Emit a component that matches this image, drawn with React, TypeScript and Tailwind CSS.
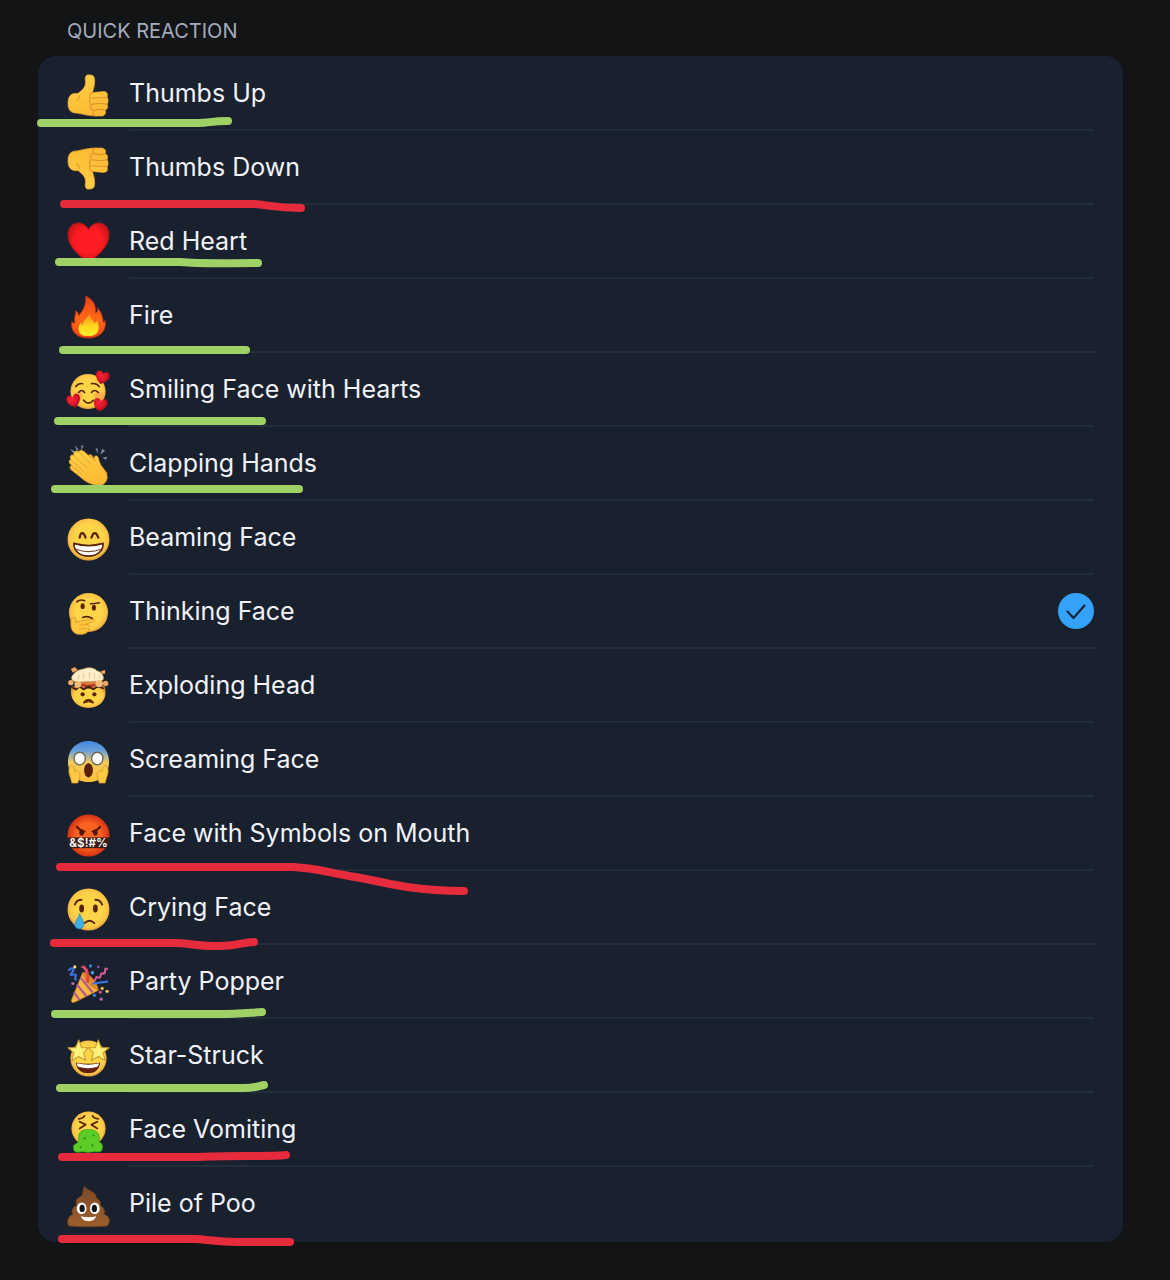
import React, { useState } from "react";

const BROWN = "#5a2408";

function Gradients() {
  return (
    <svg className="absolute h-0 w-0" aria-hidden="true">
      <defs>
        <radialGradient id="face" cx="50%" cy="48%" r="53%">
          <stop offset="0.6" stopColor="#ffd548" />
          <stop offset="0.85" stopColor="#fbc647" />
          <stop offset="1" stopColor="#dc9638" />
        </radialGradient>
        <linearGradient id="skin" x1="0" y1="0" x2="0.4" y2="1">
          <stop offset="0" stopColor="#ffd246" />
          <stop offset="1" stopColor="#fcba35" />
        </linearGradient>
        <radialGradient id="heart" cx="50%" cy="45%" r="58%">
          <stop offset="0.55" stopColor="#ff1d23" />
          <stop offset="1" stopColor="#c01216" />
        </radialGradient>
        <radialGradient id="smallHeart" cx="40%" cy="35%" r="65%">
          <stop offset="0" stopColor="#f5283a" />
          <stop offset="0.6" stopColor="#dd1526" />
          <stop offset="1" stopColor="#9b0e19" />
        </radialGradient>
        <radialGradient id="angry" cx="50%" cy="50%" r="52%">
          <stop offset="0.55" stopColor="#fb6420" />
          <stop offset="1" stopColor="#d22d13" />
        </radialGradient>
        <linearGradient id="scream" x1="0" y1="0" x2="0" y2="1">
          <stop offset="0" stopColor="#3f86e0" />
          <stop offset="0.25" stopColor="#6ea2d8" />
          <stop offset="0.52" stopColor="#f2cb5c" />
          <stop offset="1" stopColor="#fcc13c" />
        </linearGradient>
        <linearGradient id="flame" x1="0" y1="0" x2="0" y2="1">
          <stop offset="0" stopColor="#e8431a" />
          <stop offset="0.55" stopColor="#ff6a16" />
          <stop offset="1" stopColor="#f0451a" />
        </linearGradient>
        <linearGradient id="core" x1="0" y1="0" x2="0" y2="1">
          <stop offset="0" stopColor="#ff8a1c" />
          <stop offset="0.6" stopColor="#ffd91f" />
          <stop offset="1" stopColor="#fff02a" />
        </linearGradient>
        <linearGradient id="poo" x1="0" y1="0" x2="0" y2="1">
          <stop offset="0" stopColor="#7d4a2a" />
          <stop offset="1" stopColor="#9c5e2c" />
        </linearGradient>
        <clipPath id="mouthBand">
          <circle cx="22" cy="22" r="21.5" />
        </clipPath>
      </defs>
    </svg>
  );
}

function ThumbShape() {
  return (
    <>
      <path
        d="M23 1C19 0 18 4 19 8C19 14 15 17 11 20C5 19 1 22 1 30C1 37 4 40 10 40C16 41 22 43 29 43H36C40 42 40 39 39 37C42 36 42 33 41 31C43 28 42 25 41 24C42 20 41 18 37 18L26 19C28 13 29 8 28 4C27 1 25 1 23 1Z"
        fill="url(#skin)"
        stroke="#e9a030"
        strokeWidth="0.7"
      />
      <path
        d="M10 27C12 25 13 23 13 22M26 19C23 20 22 23 24 25C22 28 23 30 25 31C23 34 24 36 27 37C26 40 27 42 29 43M26 25C31 24 36 24 41 24M26 31C31 30 36 30 41 31M28 37C32 36 36 36 39 37"
        fill="none"
        stroke="#e2912b"
        strokeWidth="1.1"
        strokeLinecap="round"
      />
    </>
  );
}

function Heart({ x, y, r }: { x: number; y: number; r: number }) {
  return (
    <path
      transform={`translate(${x} ${y}) rotate(${r})`}
      d="M0 6.500C-3 5-7.500 1-7-3.500C-6.500-7.500-1.500-8 0-4C1.500-8 6.500-7.500 7-3.500C7.500 1 3 5 0 6.500Z"
      fill="url(#smallHeart)"
    />
  );
}

const art: Record<string, React.ReactNode> = {
  up: <ThumbShape />,
  down: (
    <g transform="translate(0 43) scale(1 -1)">
      <ThumbShape />
    </g>
  ),
  heart: (
    <path
      d="M22 41C14 36 1 26 1 13C1 -1 17-3 22 8C27-3 43-1 43 13C43 26 30 36 22 41Z"
      fill="url(#heart)"
      stroke="#a3171b"
      strokeWidth="1"
    />
  ),
  fire: (
    <>
      <path d="M19 0C28 4 30 11 29 17C31 17 32 15 31 12C36 17 37 24 37 27C38 26 39 26 39 25C41 37 32 43 22 43C11 43 3 37 5 26C6 28 7 28 8 27C7 22 9 19 9 15C11 16 12 18 12 20C17 14 20 8 19 0Z" fill="url(#flame)" stroke="#b92b12" strokeWidth="0.9" />
      <path d="M23 18C23 23 27 24 28 28L31 25C34 33 33 41 22 41C11 41 10 33 14 27L16 30C16 24 22 23 23 18Z" fill="url(#core)" />
    </>
  ),
  hearts: (
    <>
      <circle cx="21.5" cy="22" r="18" fill="url(#face)" />
      <circle cx="11" cy="27" r="5" fill="#f98b4b" opacity="0.5" />
      <circle cx="33" cy="27" r="5" fill="#f98b4b" opacity="0.5" />
      <path d="M9 17Q12 13 16 14M25 14Q30 13 33 17M12 23Q15 19 18 23M25 23Q28 19 32 23" fill="none" stroke={BROWN} strokeWidth="1.7" strokeLinecap="round" />
      <path d="M17 31Q22 37 27 31" fill="none" stroke={BROWN} strokeWidth="1.8" strokeLinecap="round" />
      <Heart x={36} y={8} r={15} />
      <Heart x={7} y={32} r={-15} />
      <Heart x={34} y={36} r={10} />
    </>
  ),
  clap: (
    <>
      <path d="M3 5L9 8L7 10ZM8 1L12 6L10 7ZM15 1L17 2L14 7ZM29 5L31 4L32 10ZM36 5L39 7L34 11ZM36 14L41 13L40 16Z" fill="#7f8da8" />
      <path d="M20 16C21 10 25 9 27 14C31 18 38 25 41 30L34 39L20 29Z" fill="#f3ad35" stroke="#db8b25" strokeWidth="0.7" />
      <path d="M12 8C14 5 17 7 20 10L29 18C26 13 30 10 32 14C33 20 36 24 39 28C43 34 41 39 36 42C28 43 20 40 14 34L5 27C2 25 3 22 5 22C1 19 2 16 4 16C2 12 5 10 7 12C6 8 10 6 12 8Z" fill="url(#skin)" stroke="#e39b2d" strokeWidth="0.7" />
      <path d="M12 8L25 21M7 12L20 24M4 16L17 28M5 22L14 30" fill="none" stroke="#e2942b" strokeWidth="0.8" strokeLinecap="round" />
    </>
  ),
  beam: (
    <>
      <circle cx="22" cy="22" r="21.5" fill="url(#face)" />
      <path d="M13 20C14 14 17 14 19 20M25 20C27 14 30 14 32 20" fill="none" stroke={BROWN} strokeWidth="2.3" strokeLinecap="round" />
      <path d="M7 26C17 29 27 29 37 26C37 34 31 39 22 39C13 39 7 34 7 26Z" fill="#fff" stroke={BROWN} strokeWidth="1.7" strokeLinejoin="round" />
      <path d="M9 32C17 35 27 35 35 32" fill="none" stroke="#754630" strokeWidth="1.3" />
    </>
  ),
  think: (
    <>
      <circle cx="22" cy="21" r="20" fill="url(#face)" />
      <ellipse cx="16" cy="14.5" rx="2.1" ry="3" fill={BROWN} />
      <ellipse cx="27.500" cy="16" rx="2.1" ry="3" fill={BROWN} />
      <path d="M10 10Q14 7 18 9M24 12Q29 12 33 11" fill="none" stroke={BROWN} strokeWidth="1.7" strokeLinecap="round" />
      <path d="M16 26Q21 24 26 27" fill="none" stroke={BROWN} strokeWidth="1.7" strokeLinecap="round" />
      <path d="M6 26C8 25 9 27 9 31C15 29 22 28 27 28C30 29 28 31 25 31L19 33C23 33 24 35 22 37C23 43 15 44 10 43C5 41 4 37 4 32C4 29 4 27 6 26Z" fill="#ffc63d" stroke="#dd9630" strokeWidth="0.9" />
      <path d="M13 34L19 33M13 38L21 37" stroke="#e19b2c" strokeWidth="0.8" />
    </>
  ),
  explode: (
    <>
      <path d="M5 20C10 24 33 24 38 20C43 33 34 43 22 43C10 43 1 33 5 20Z" fill="url(#face)" />
      <path d="M10 14H34V21L28 23L22 21L16 23L10 20Z" fill="#d9793f" />
      <path d="M15 19Q22 22 29 19" fill="none" stroke="#a8321e" strokeWidth="2" />
      <path d="M4 21L9 24L13 21L17 24L22 21L27 24L31 21L38 23" fill="none" stroke="#43200f" strokeWidth="1.7" />
      <path d="M6 15C3 12 6 9 8 7C11 3 16 4 20 2C25 1 29 3 31 5C36 6 38 11 37 14C33 17 28 15 24 16C18 15 12 18 6 15Z" fill="#ffefc8" stroke="#d49a56" strokeWidth="0.7" />
      <path d="M12 9V14M17 7V13M23 6V13M28 7V13M33 9V13" stroke="#dfbd85" strokeWidth="0.8" />
      <circle cx="4" cy="17" r="2.800" fill="#f3ae66" />
      <circle cx="11" cy="19" r="3.4" fill="#f7bd78" />
      <circle cx="33" cy="18" r="3.800" fill="#f7bd78" />
      <circle cx="39.5" cy="18" r="2.8" fill="#efa55c" />
      <path d="M4 3L8 1L11 4L6 7ZM35 5L39 4L39 8L35 8Z" fill="#f3a65d" />
      <circle cx="16" cy="29" r="2.2" fill={BROWN} />
      <circle cx="28" cy="29" r="2.2" fill={BROWN} />
      <path d="M17 38C17 33 27 33 27 38Q22 35 17 38Z" fill={BROWN} stroke={BROWN} strokeWidth="1" />
    </>
  ),
  scream: (
    <>
      <path d="M22 1C34 1 43 10 43 22C43 33 37 43 22 43C7 43 1 33 1 22C1 10 10 1 22 1Z" fill="url(#scream)" />
      <ellipse cx="13" cy="19" rx="5.8" ry="6.5" fill="#fff" stroke="#706752" strokeWidth="1.4" />
      <ellipse cx="31" cy="19" rx="5.8" ry="6.5" fill="#fff" stroke="#706752" strokeWidth="1.4" />
      <ellipse cx="22" cy="31" rx="4.5" ry="7.3" fill="#59200c" />
      <path d="M3 27C6 25 8 29 8 32C12 31 14 34 13 38L11 44H5C4 38 0 33 3 27ZM41 27C38 25 36 29 36 32C32 31 30 34 31 38L33 44H39C40 38 44 33 41 27Z" fill="#ffc941" stroke="#d8942c" strokeWidth="0.8" />
    </>
  ),
  symbols: (
    <>
      <circle cx="22" cy="22" r="21.5" fill="url(#angry)" />
      <path d="M10 13Q13 17 18 18M34 13Q31 17 26 18" fill="none" stroke="#52150a" strokeWidth="2" strokeLinecap="round" />
      <ellipse cx="15" cy="19" rx="2.4" ry="3.2" fill="#52150a" />
      <ellipse cx="29" cy="19" rx="2.4" ry="3.2" fill="#52150a" />
      <rect x="0" y="24" width="44" height="11" fill="#391b16" clipPath="url(#mouthBand)" />
      <text x="22" y="34" textAnchor="middle" fontFamily="Inter, sans-serif" fontSize="12" fontWeight="600" fill="#fff">
        &amp;$!#%
      </text>
    </>
  ),
  cry: (
    <>
      <circle cx="22" cy="22" r="21.5" fill="url(#face)" />
      <ellipse cx="15" cy="21" rx="2.5" ry="4" fill={BROWN} />
      <ellipse cx="29" cy="21" rx="2.5" ry="4" fill={BROWN} />
      <path d="M8 17Q10 12 15 12M29 12Q34 12 36 17M18 36Q23 31 28 36" fill="none" stroke={BROWN} strokeWidth="1.9" strokeLinecap="round" />
      <path d="M13 26C14 31 18 33 17 38C16 43 9 43 8 38C8 33 12 31 13 26Z" fill="#42afea" stroke="#258ac5" strokeWidth="0.8" />
    </>
  ),
  party: (
    <>
      <path d="M16 11C23 12 30 20 32 29L8 41C5 42 4 41 5 38Z" fill="#f7b83c" stroke="#dc9129" strokeWidth="0.7" />
      <path d="M14 16L26 31M10 23L20 35M7 31L13 39" stroke="#b0569a" strokeWidth="2.2" />
      <path d="M16 11C20 9 31 20 32 29C26 27 17 19 16 11Z" fill="#e08a2e" stroke="#c9702a" strokeWidth="0.6" />
      <path d="M21 20C22 14 22 9 17 5" fill="none" stroke="#e8433b" strokeWidth="3" strokeLinecap="round" />
      <path d="M20 11C20 8 18 6 15 5" fill="none" stroke="#dc5797" strokeWidth="1.5" strokeLinecap="round" />
      <path d="M2 8C6 5 8 8 5 11C1 15 7 12 9 13C10 14 7 16 9 18M27 22L41 20" fill="none" stroke="#3c6fe0" strokeWidth="2.3" strokeLinecap="round" />
      <path d="M41 7C37 5 41 12 37 12C33 10 36 17 32 16C29 14 30 18 28 19" fill="none" stroke="#dc5797" strokeWidth="2.1" strokeLinecap="round" />
      <circle cx="8" cy="5" r="1.6" fill="#ffe083" />
      <circle cx="24" cy="4" r="1.6" fill="#3788df" />
      <circle cx="26" cy="11" r="1.7" fill="#46a6e4" />
      <circle cx="32" cy="5" r="1.3" fill="#8b52b7" />
      <circle cx="6" cy="22" r="1.6" fill="#bd65bd" />
      <circle cx="36" cy="27" r="1.6" fill="#f3c04b" />
      <circle cx="41" cy="30" r="1.6" fill="#f2ca70" />
      <circle cx="34" cy="31" r="1.5" fill="#dc5797" />
      <circle cx="28" cy="34" r="1.7" fill="#397be6" />
      <circle cx="35" cy="38" r="1.7" fill="#bd65bd" />
    </>
  ),
  star: (
    <>
      <circle cx="22" cy="23" r="18.5" fill="url(#face)" />
      <path d="M12 4L15 12L22 12L17 17L19 25L12 21L5 25L7 17L1 12L9 12ZM32 4L35 12L43 12L37 17L39 25L32 21L25 25L27 17L22 12L29 12Z" fill="#fff17a" stroke="#c99c2e" strokeWidth="1.1" strokeLinejoin="round" />
      <path d="M9 27Q22 30 34 27C33 35 28 38 22 38C15 38 10 35 9 27Z" fill="#60200d" />
      <path d="M10 28Q22 31 33 28Q32 32 29 32Q22 34 14 32Q10 32 10 28Z" fill="#fff" />
    </>
  ),
  vomit: (
    <>
      <circle cx="22" cy="19" r="17.5" fill="url(#face)" />
      <path d="M12 9Q16 9 18 6M26 6Q28 9 32 9M13 12L19 15L13 19M31 12L25 15L31 19" fill="none" stroke={BROWN} strokeWidth="1.8" strokeLinecap="round" strokeLinejoin="round" />
      <path d="M12 26C13 21 17 20 22 20C28 20 32 22 33 27V33C37 34 37 39 35 42C31 44 28 42 25 43C20 44 17 42 13 43C8 44 6 41 7 39C5 35 11 35 12 32Z" fill="#5dcc27" stroke="#3ca51c" strokeWidth="0.8" />
      <circle cx="18" cy="29" r="1.3" fill="#32991d" />
      <circle cx="27" cy="26" r="1.2" fill="#32991d" />
      <circle cx="26" cy="36" r="1.3" fill="#32991d" />
      <circle cx="14" cy="38" r="1.2" fill="#32991d" />
    </>
  ),
  poo: (
    <>
      <path d="M18 2C20 7 30 7 30 14C33 16 35 19 34 22C38 24 39 27 38 31C44 33 45 39 41 43C31 44 12 44 2 43C-1 39 1 33 6 31C4 27 6 23 10 22C8 18 10 14 14 13C17 10 16 6 18 2Z" fill="url(#poo)" stroke="#6b3d1f" strokeWidth="0.7" />
      <ellipse cx="15" cy="25" rx="5" ry="6" fill="#fff" />
      <ellipse cx="28.5" cy="25" rx="5" ry="6" fill="#fff" />
      <ellipse cx="15.5" cy="25" rx="2.7" ry="3.700" fill="#141416" />
      <ellipse cx="28" cy="25" rx="2.7" ry="3.700" fill="#141416" />
      <path d="M14 33Q22 35 30 33Q28 38 22 38Q16 38 14 33Z" fill="#fff" />
    </>
  ),
};

const GREEN = "#9fd166";
const RED = "#e62c3c";

type Reaction = { id: string; name: string; mark?: string; color?: string };

const reactions: Reaction[] = [
  { id: "up", name: "Thumbs Up", color: GREEN, mark: "M3 66H160C172 66 172 64 190 64" },
  { id: "down", name: "Thumbs Down", color: RED, mark: "M26 73H215C230 74 238 77 263 77" },
  { id: "heart", name: "Red Heart", color: GREEN, mark: "M21 57H142C165 59 185 58 220 58" },
  { id: "fire", name: "Fire", color: GREEN, mark: "M25 71H208" },
  { id: "hearts", name: "Smiling Face with Hearts", color: GREEN, mark: "M20 68H224" },
  { id: "clap", name: "Clapping Hands", color: GREEN, mark: "M17 62H261" },
  { id: "beam", name: "Beaming Face" },
  { id: "think", name: "Thinking Face" },
  { id: "explode", name: "Exploding Head" },
  { id: "scream", name: "Screaming Face" },
  { id: "symbols", name: "Face with Symbols on Mouth", color: RED, mark: "M22 70H255C275 71 290 75 306 78C335 83 355 88 369 90C390 93 405 94 426 94" },
  { id: "cry", name: "Crying Face", color: RED, mark: "M16 72H140C155 73 160 75 175 75C200 76 203 71 216 71" },
  { id: "party", name: "Party Popper", color: GREEN, mark: "M17 69H180C200 69 208 68 224 67" },
  { id: "star", name: "Star-Struck", color: GREEN, mark: "M22 69H205C218 69 220 67 226 66" },
  { id: "vomit", name: "Face Vomiting", color: RED, mark: "M24 64H160C190 62 230 64 248 62" },
  { id: "poo", name: "Pile of Poo", color: RED, mark: "M24 72H155C170 72 175 75 200 75H252" },
];

export default function App() {
  const [selected, setSelected] = useState("think");
  return (
    <main className="min-h-screen bg-[#121415] pt-4 pr-[47px] pb-[38px] pl-[38px] font-['Inter',sans-serif]">
      <Gradients />
      <h1 id="quick-reaction" className="mb-2.5 pl-[29px] text-xl leading-[30px] text-[#a3abbd]">
        QUICK REACTION
      </h1>
      <div role="radiogroup" aria-labelledby="quick-reaction" className="rounded-[18px] bg-[#1a212e] py-px">
        {reactions.map((r, i) => (
          <label key={r.id} className="relative flex h-[74px] cursor-pointer items-center gap-[19px] px-[29px]">
            <svg viewBox="0 0 44 44" className="mt-0.5 size-[43px] shrink-0 overflow-visible" aria-hidden="true">
              {art[r.id]}
            </svg>
            <span
              className={
                i < reactions.length - 1
                  ? "flex h-full grow items-center justify-between border-b-2 border-[#232e3b]"
                  : "flex h-full grow items-center justify-between border-b-2 border-transparent"
              }
            >
              <span className="text-[25px] leading-8 text-[#f1f3f8]">{r.name}</span>
              <input
                type="radio"
                name="reaction"
                value={r.id}
                checked={selected === r.id}
                onChange={() => setSelected(r.id)}
                className="peer sr-only"
              />
              <svg viewBox="0 0 36 36" className="hidden size-9 peer-checked:block" aria-hidden="true">
                <circle cx="18" cy="18" r="18" fill="#33a2f8" />
                <path d="M9.500 18.500L15.500 25L26.500 12.500" fill="none" stroke="#172638" strokeWidth="2.200" strokeLinecap="round" strokeLinejoin="round" />
              </svg>
            </span>
            {r.mark && (
              <svg className="pointer-events-none absolute top-0 left-0 h-full w-full overflow-visible" aria-hidden="true">
                <path d={r.mark} fill="none" stroke={r.color} strokeWidth="8" strokeLinecap="round" strokeLinejoin="round" />
              </svg>
            )}
          </label>
        ))}
      </div>
    </main>
  );
}
